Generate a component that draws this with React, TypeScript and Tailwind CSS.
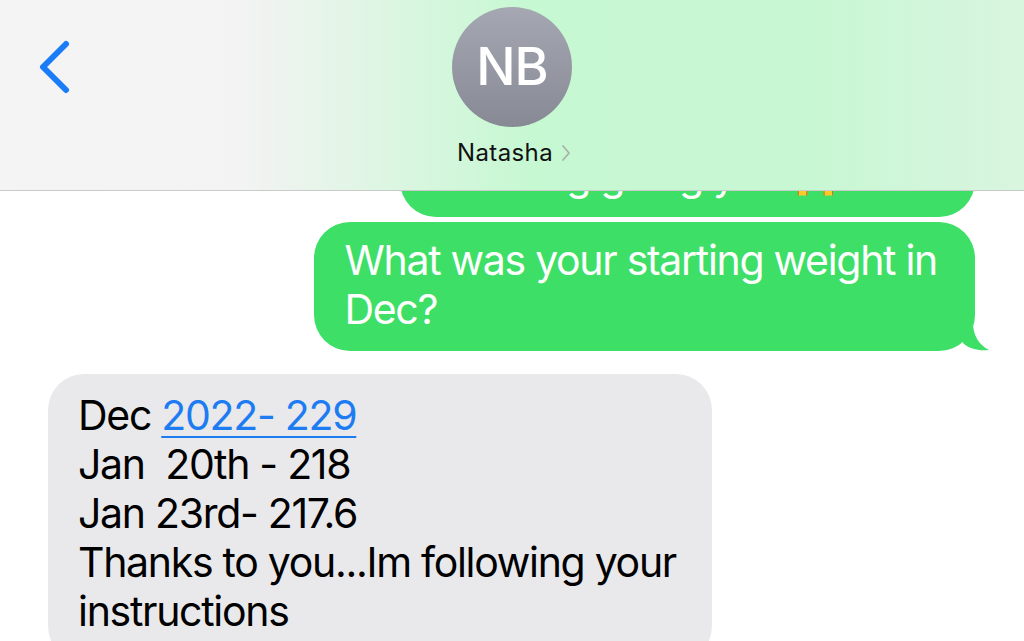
import React from 'react'

const font = { fontFamily: 'Inter, "Liberation Sans", sans-serif' }

function BackChevron() {
  return (
    <svg width="34" height="54" viewBox="0 0 34 54" fill="none">
      <path d="M29 4 L6 27 L29 50" stroke="#1a7cf6" strokeWidth="6" strokeLinecap="round" strokeLinejoin="round" />
    </svg>
  )
}

function Header() {
  return (
    <div className="absolute inset-x-0 top-0 z-10 h-[191px] border-b border-[#c9cbc9] bg-[linear-gradient(90deg,#f4f4f4_0%,#f2f3f2_24%,#dcf6e2_38%,#c6f8d2_52%,#c7f7d3_78%,#d9f5df_100%)]">
      <div className="absolute left-[37px] top-[40px]">
        <BackChevron />
      </div>
      <div className="flex flex-col items-center pt-[7px]">
        <div className="flex h-[120px] w-[120px] items-center justify-center rounded-full bg-[linear-gradient(180deg,#a5a8b2,#878a95)]">
          <span className="text-[52px] font-medium tracking-[-1px] text-white">NB</span>
        </div>
        <div className="mt-[14px] flex items-center gap-[8px] pl-[4px]">
          <span className="text-[24px] leading-[24px] tracking-[0.4px] text-[#111]">Natasha</span>
          <svg width="10" height="18" viewBox="0 0 10 18" fill="none">
            <path d="M2 2 L8 9 L2 16" stroke="#a7b3a9" strokeWidth="1.8" strokeLinecap="round" strokeLinejoin="round" />
          </svg>
        </div>
      </div>
    </div>
  )
}

function Tail() {
  return (
    <svg className="absolute bottom-0 right-[-16px]" width="32" height="28" viewBox="0 0 32 28">
      <path d="M0 0 L14 0 C14 12 20 22 30 27 C20 28 10 26 4 20 Z" fill="#3ddf66" />
    </svg>
  )
}

export default function App() {
  return (
    <div className="relative h-[641px] w-[1024px] overflow-hidden bg-white" style={font}>
      <Header />
      <div className="flex flex-col text-[41px] leading-[49px] tracking-[-1.3px]">
        <div className="flex justify-end pr-[49px]">
          {/* mostly hidden behind the header */}
          <div className="mt-[97px] flex h-[120px] w-[575px] items-end whitespace-nowrap rounded-[36px] bg-[#3ddf66] px-[30px] pb-[34px] leading-[16px] text-white">
            Amazing going you 🙌
          </div>
        </div>
        <div className="mt-[5px] flex justify-end pr-[49px]">
          <div className="relative whitespace-nowrap rounded-[36px] bg-[#3ddf66] pb-[17px] pl-[30px] pr-[38px] pt-[14px] text-white">
            What was your starting weight in
            <br />
            Dec?
            <Tail />
          </div>
        </div>
        <div className="mt-[23px] flex justify-start pl-[48px]">
          <div className="w-[664px] whitespace-nowrap rounded-[36px] bg-[#e9e9eb] px-[30px] pb-[26px] pt-[17px] text-black">
            Dec <span className="text-[#1d7cf2] underline decoration-[2px] underline-offset-[6px]">2022- 229</span>
            <br />
            Jan&nbsp; 20th - 218
            <br />
            Jan 23rd- 217.6
            <br />
            Thanks to you...Im following your
            <br />
            instructions
          </div>
        </div>
      </div>
    </div>
  )
}
